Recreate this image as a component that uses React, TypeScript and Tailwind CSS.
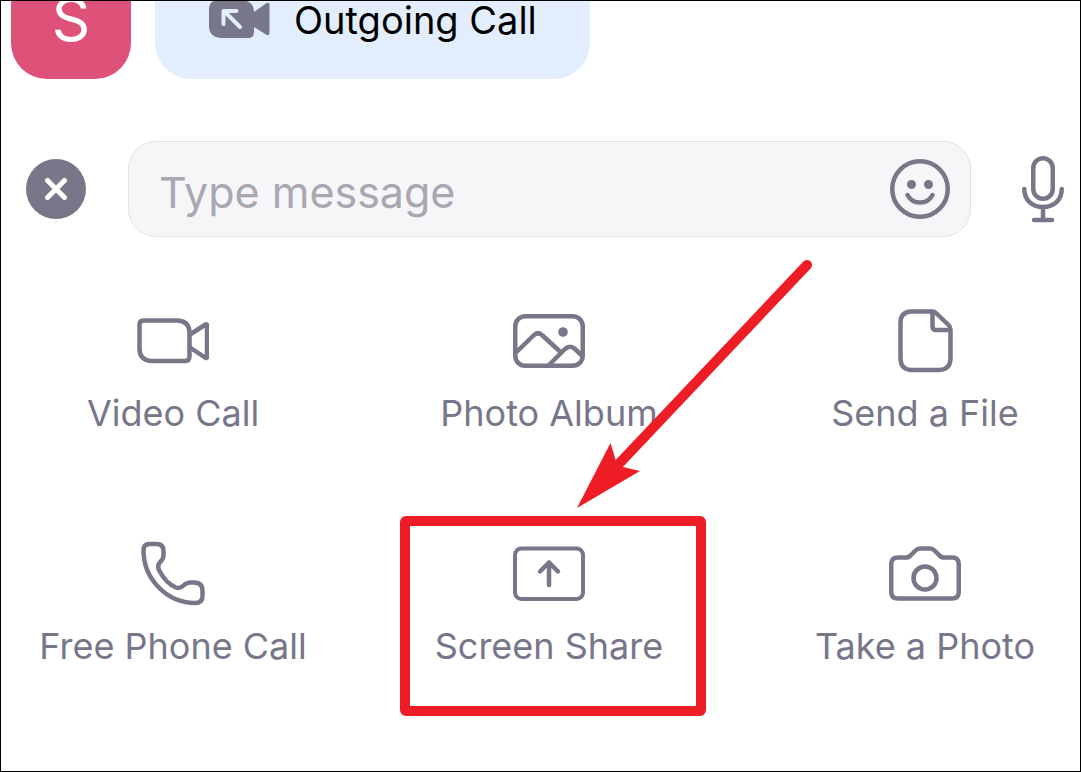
import clsx from 'clsx';
import type { ReactNode } from 'react';

type IconProps = { children: ReactNode };
const ActionIcon = ({ children }: IconProps) => (
    <svg
        viewBox="0 0 72 72"
        className="size-[72px]"
        fill="none"
        stroke="currentColor"
        strokeWidth={4.5}
        strokeLinecap="round"
        strokeLinejoin="round"
        aria-hidden="true"
    >
        {children}
    </svg>
);

type Action = {
    label: string;
    icon: ReactNode;
    highlighted?: boolean;
};

const actions: Action[] = [
    {
        label: 'Video Call',
        icon: (
            <>
                <path d="M6.5 15.5H41Q52.5 16.5 52.5 28V51.5Q52.5 56 48 56H14Q2.5 55 2.5 43.5V19.5Q2.5 15.5 6.5 15.5Z" />
                <path d="M53 29.5 68.5 19.5Q70 18.5 70 20.5V51.5Q70 54 68 52.5L53 42.5" />
            </>
        ),
    },
    {
        label: 'Photo Album',
        icon: (
            <>
                <rect x="2.25" y="11.25" width="67.5" height="49.5" rx="10" />
                <path strokeLinecap="butt" d="M3 47.5 20.5 30.5Q25 26 29.5 30.5L47 46.5" />
                <path strokeLinecap="butt" d="M34.5 61.5 52 44Q57 39.5 62 44L70 51.5" />
                <circle cx="50" cy="27" r="4.8" fill="currentColor" stroke="none" />
            </>
        ),
    },
    {
        label: 'Send a File',
        icon: (
            <>
                <path d="M22 6.5H43.5Q45.5 6.5 47 8L59.5 20Q61.5 22 61.5 24.5V54Q61 64.5 50.5 65H22Q12 64.5 11.5 54V17Q12 7 22 6.5Z" />
                <path d="M43.5 7V21.5Q43.5 25 47 25H61" />
            </>
        ),
    },
    {
        label: 'Free Phone Call',
        icon: (
            <path d="M12.5 6H19.5Q26.5 6 26.5 13V17Q26.5 21 23.5 23.5Q19.5 28 22.5 33C27 41.5 33 47 39 49.5Q43 51 46.5 47.5Q49.5 44.5 54 44.5H57Q65.5 44.5 65.5 53V58Q65.5 65 58 65C29 65 6.5 40 6.5 12.5Q6.5 6 12.5 6Z" />
        ),
    },
    {
        label: 'Screen Share',
        highlighted: true,
        icon: (
            <>
                <rect x="2" y="10.5" width="68" height="50.5" rx="6.5" strokeWidth={4} />
                <path d="M36 47V25M27 33.5 36 24.5 45 33.5" />
            </>
        ),
    },
    {
        label: 'Take a Photo',
        icon: (
            <>
                <path d="M9 19.5H17Q20 19.5 22 17L26.5 12.5Q28.5 10.5 31 10.5H41Q43.5 10.5 45.5 12.5L50 17Q52 19.5 55 19.5H63Q69.75 19.5 69.75 26V54Q69.75 60.5 63 60.5H9Q2.25 60.5 2.25 54V26Q2.25 19.5 9 19.5Z" />
                <circle cx="36" cy="40" r="11.5" />
            </>
        ),
    },
];

// red frame with the arrow that points down to it
const Callout = () => (
    <div className="pointer-events-none absolute -top-[22px] left-[calc(50%-149px)] h-[200px] w-[306px]">
        <div className="size-full rounded-md border-10 border-[#ee1c25]" />
        <svg viewBox="0 0 236 250" className="absolute -top-[257px] left-[177px] h-[250px] w-[236px]" aria-hidden="true">
            <path d="M230 6 38 209" stroke="#ee1c25" strokeWidth={10} strokeLinecap="round" />
            <path d="M0 249 33.5 184 39 202 46 208 63 212Z" fill="#ee1c25" />
        </svg>
    </div>
);

const ActionButton = ({ label, icon, highlighted }: Action) => (
    <div className={clsx('relative flex justify-center', highlighted && 'z-10')}>
        <button type="button" className="flex flex-col items-center gap-3 whitespace-nowrap">
            <ActionIcon>{icon}</ActionIcon>
            <span className="text-[36px] leading-[48px]">{label}</span>
        </button>
        {highlighted && <Callout />}
    </div>
);

const LastMessage = () => (
    <div className="flex h-[78px] items-end gap-6 overflow-hidden pl-[10px]">
        <div className="flex size-[120px] shrink-0 items-center justify-center rounded-[36px] bg-[#de5279] text-[60px] leading-none text-white">
            S
        </div>
        <div className="flex h-[118px] w-[435px] shrink-0 items-center gap-6 rounded-[36px] bg-[#e2eefd] pl-[54px] text-[38px] leading-none whitespace-nowrap text-black">
            <svg viewBox="0 0 61 40" className="h-10 w-[61px] text-[#787689]" fill="currentColor" aria-hidden="true">
                <path d="M10 0H33Q45 1 45 12L57 3.5Q60.5 1.5 60.5 5V33Q60.5 36.5 57 34.5L45 27V32Q45 38 39 38H12Q0 37 0 26V10Q0 0 10 0Z" />
                <path
                    d="M31 27 15 11M14.5 24V11H27.5"
                    fill="none"
                    stroke="#e2eefd"
                    strokeWidth={4}
                    strokeLinecap="round"
                    strokeLinejoin="round"
                />
            </svg>
            Outgoing Call
        </div>
    </div>
);

const Composer = () => (
    <div className="mt-[62px] flex items-center pr-[15px] pl-[25px]">
        <button
            type="button"
            aria-label="Close"
            className="flex size-[60px] shrink-0 items-center justify-center rounded-full bg-[#787689] text-white"
        >
            <svg viewBox="0 0 24 24" className="size-6" stroke="currentColor" strokeWidth={5} strokeLinecap="round" aria-hidden="true">
                <path d="M3.5 3.5 20.5 20.5M20.5 3.5 3.5 20.5" />
            </svg>
        </button>
        <div className="ml-[42px] flex h-24 min-w-0 flex-1 items-center rounded-[28px] border border-[#e3e1e7] bg-[#f6f6f9] pr-5 pl-[30px]">
            <input
                type="text"
                aria-label="Type message"
                placeholder="Type message"
                className="h-full min-w-0 flex-1 bg-transparent pt-1.5 text-[43px] outline-none placeholder:text-[#a8a7b2]"
            />
            <button type="button" aria-label="Emoji">
                <svg viewBox="0 0 60 60" className="size-[60px]" fill="none" stroke="currentColor" strokeWidth={4.5} strokeLinecap="round" aria-hidden="true">
                    <circle cx="30" cy="30" r="27.75" />
                    <path d="M17.5 36Q21.500 43.500 30 43.500Q38.500 43.500 42.500 36" />
                    <circle cx="21.5" cy="25.5" r="4.5" fill="currentColor" stroke="none" />
                    <circle cx="38.5" cy="25.5" r="4.5" fill="currentColor" stroke="none" />
                </svg>
            </button>
        </div>
        <button type="button" aria-label="Record voice message" className="ml-[50px] shrink-0">
            <svg viewBox="0 0 44 68" className="h-[68px] w-11" fill="none" stroke="currentColor" strokeWidth={4.5} strokeLinecap="round" aria-hidden="true">
                <rect x="12.25" y="3.25" width="19.5" height="40.5" rx="9.75" />
                <path d="M3.25 34C3.25 45 11 52 22 52S40.75 45 40.75 34M22 53V64" />
                <path d="M13 65H31" />
            </svg>
        </button>
    </div>
);

const App = () => {
    return (
        <main className="min-h-screen overflow-hidden border border-black bg-white font-['Inter',sans-serif] text-[#787689]">
            <LastMessage />
            <Composer />
            <section className="mt-[68px] -mr-[33px] -ml-4 grid grid-cols-3 gap-y-[101px]">
                {actions.map((action) => (
                    <ActionButton key={action.label} {...action} />
                ))}
            </section>
        </main>
    );
};

export default App;
